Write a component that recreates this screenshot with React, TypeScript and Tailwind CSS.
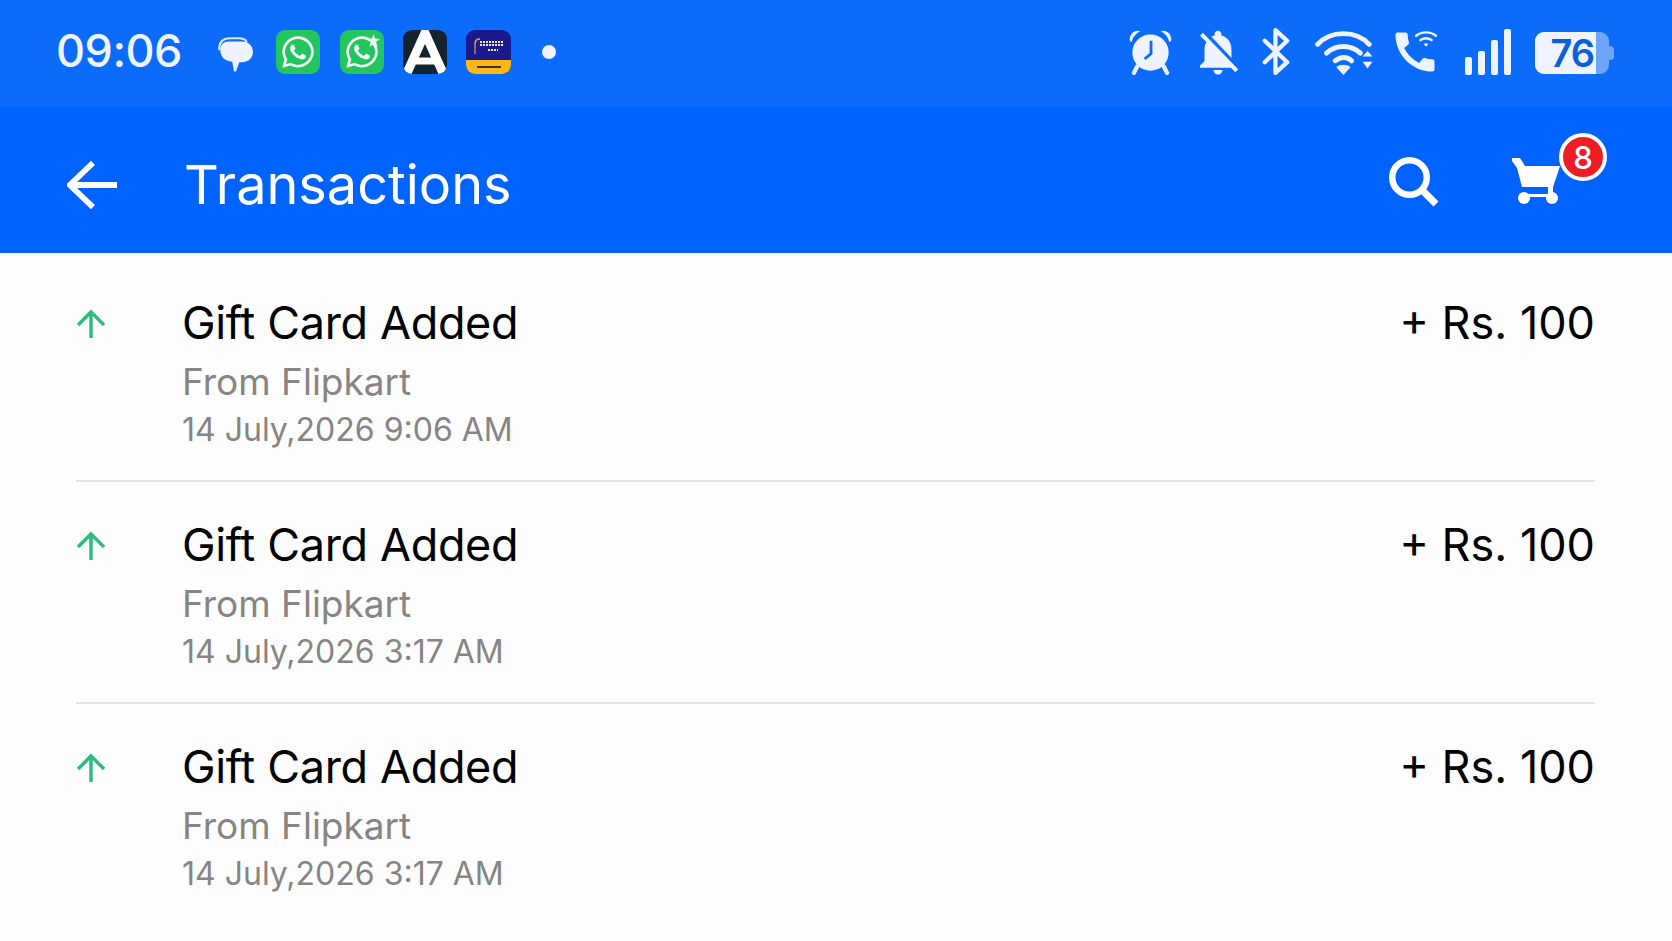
import { FaWhatsapp } from 'react-icons/fa';
import { MdNotificationsOff, MdCall } from 'react-icons/md';

const font = 'font-["Inter","Liberation_Sans",sans-serif]';

function ChatIcon() {
  return (
    <svg width="38" height="37" viewBox="0 0 33 34" fill="none" className="shrink-0 mt-[3px]">
      <path d="M2 13C2 6 6 3 12 3h8c4 0 6 1 7 3" stroke="#dfe9fb" strokeWidth="2" strokeLinecap="round" />
      <path d="M11 6h12c6 0 10 4 10 9.500S29 25 23 25h-2.500l-3 8c-.5 1-1.500 1-2 0l-1.500-8.500C7 24 3 20 3 14c0-5 3-8 8-8z" fill="#eef3fd" />
    </svg>
  );
}

function AppLogo() {
  return (
    <div className="w-[44px] h-[44px] rounded-[9px] bg-[#14242f] overflow-hidden shrink-0 ml-[19px]">
      <svg width="44" height="44" viewBox="0 0 44 44" fill="none">
        <path d="M4 43 22 3 40 43" stroke="#fff" strokeWidth="9" />
        <path d="M12 31h20" stroke="#fff" strokeWidth="7" />
      </svg>
    </div>
  );
}

function BannerApp() {
  return (
    <div className="w-[45px] h-[44px] rounded-[9px] bg-[#1a1a8c] overflow-hidden shrink-0 ml-[19px] flex flex-col">
      <svg width="45" height="30" viewBox="0 0 45 30" fill="none" className="shrink-0">
        <path d="M9 14c0-3 2-5 5-5" stroke="#e8a23c" strokeWidth="1.500" />
        <path d="M9 14v10" stroke="#e8a23c" strokeWidth="1.200" />
        <path d="M14 12h23M14 15h23M22 20h10" stroke="#e6e6f5" strokeWidth="1.800" strokeDasharray="2 1" />
      </svg>
      <div className="flex-1 bg-[#fcb814] flex items-center justify-center">
        <div className="w-[24px] h-[2px] bg-[#3a2c10]" />
      </div>
    </div>
  );
}

function AlarmIcon() {
  return (
    <svg width="45" height="47" viewBox="0 0 41 44" fill="none" className="shrink-0">
      <path d="M1 11C1 5 6 1 11 3 7 5 4 8 3 13c-1 0-2-1-2-2zM40 11c0-6-5-10-10-8 4 2 7 5 8 10 1 0 2-1 2-2z" fill="#eef3fd" />
      <path d="M8 36 5 42M33 36l3 6" stroke="#eef3fd" strokeWidth="4" strokeLinecap="round" />
      <circle cx="20.500" cy="23" r="17" fill="#eef3fd" />
      <path d="M21 12v12l-6 5" stroke="#0b6cfb" strokeWidth="2.600" />
    </svg>
  );
}

function BluetoothIcon() {
  return (
    <svg width="29" height="47" viewBox="0 0 26 44" fill="none" className="shrink-0 ml-[22px]">
      <path d="M2 12 23 32 12 42V2l11 10L2 32" stroke="#eef3fd" strokeWidth="4" strokeLinejoin="round" strokeLinecap="round" />
    </svg>
  );
}

function WifiIcon() {
  return (
    <svg width="59" height="46" viewBox="0 0 53 42" fill="none" className="shrink-0 ml-[24px]">
      <path d="M2 14C14 1 37 1 49 14" stroke="#eef3fd" strokeWidth="4.500" strokeLinecap="round" />
      <path d="M10 22c9-8 22-8 31 0" stroke="#eef3fd" strokeWidth="4.500" strokeLinecap="round" />
      <path d="M18 29c5-4 11-4 15 0" stroke="#eef3fd" strokeWidth="4.500" strokeLinecap="round" />
      <path d="M19 35c3-3 10-3 13 0l-6.500 7z" fill="#eef3fd" />
      <path d="M43 25h9l-4.500-5zM43 30h9l-4.500 6z" fill="#eef3fd" />
    </svg>
  );
}

function CallWifiIcon() {
  return (
    <div className="relative w-[42px] h-[44px] shrink-0 ml-[21px]">
      <MdCall size={52} className="text-[#eef3fd] -ml-[6px] -mt-[4px]" />
      <svg width="22" height="18" viewBox="0 0 20 16" fill="none" className="absolute right-0 top-0">
        <path d="M1 5c5-4 13-4 18 0M5 9c3-2 7-2 10 0" stroke="#eef3fd" strokeWidth="2.200" strokeLinecap="round" />
        <path d="M8 12.500c1-1 3-1 4 0l-2 2.500z" fill="#eef3fd" />
      </svg>
    </div>
  );
}

function SignalIcon() {
  return (
    <div className="flex items-end gap-[6px] h-[46px] shrink-0 ml-[28px]">
      <div className="w-[7px] h-[18px] rounded-[2px] bg-[#eef3fd]" />
      <div className="w-[7px] h-[24px] rounded-[2px] bg-[#eef3fd]" />
      <div className="w-[7px] h-[35px] rounded-[2px] bg-[#eef3fd]" />
      <div className="w-[7px] h-[46px] rounded-[2px] bg-[#eef3fd]" />
    </div>
  );
}

function Battery() {
  return (
    <div className="flex items-center shrink-0 ml-[24px] mt-[3px]">
      <div className="w-[74px] h-[42px] rounded-[9px] bg-[#6fa5f8] flex">
        <div className="w-[61px] h-full rounded-l-[9px] bg-[#eef3fd] flex items-center justify-end pr-[2px]">
          <span className="text-[38px] leading-[42px] font-semibold text-[#0b5fd8] tracking-[-1px]">76</span>
        </div>
      </div>
      <div className="w-[5px] h-[14px] rounded-r-[4px] bg-[#6fa5f8]" />
    </div>
  );
}

function StatusBar() {
  return (
    <div className="h-[106px] bg-[#0b6cfb] flex items-center pl-[56px] pr-[58px] pb-[3px]">
      <span className="text-[45px] leading-none font-medium tracking-[-0.5px] text-[#eef3fd] w-[160px] shrink-0 -mt-[2px]">09:06</span>
      <ChatIcon />
      <div className="w-[44px] h-[44px] rounded-[9px] bg-[#22c55e] flex items-center justify-center shrink-0 ml-[22px]">
        <FaWhatsapp size={36} className="text-[#f2fbf5]" />
      </div>
      <div className="relative w-[44px] h-[44px] rounded-[9px] bg-[#22c55e] flex items-center justify-center shrink-0 ml-[20px]">
        <FaWhatsapp size={36} className="text-[#f2fbf5]" />
        <svg width="13" height="13" viewBox="0 0 12 12" className="absolute right-[4px] top-[4px]">
          <path d="M6 0 7.400 4.200 12 4.500 8.400 7.200 9.700 12 6 9.300 2.300 12 3.600 7.200 0 4.500 4.600 4.200z" fill="#f2fbf5" />
        </svg>
      </div>
      <AppLogo />
      <BannerApp />
      <div className="w-[14px] h-[14px] rounded-full bg-[#eef3fd] shrink-0 ml-[31px]" />

      <div className="ml-auto flex items-center">
        <AlarmIcon />
        <MdNotificationsOff size={54} className="text-[#eef3fd] shrink-0 ml-[18px] -mr-[5px]" />
        <BluetoothIcon />
        <WifiIcon />
        <CallWifiIcon />
        <SignalIcon />
        <Battery />
      </div>
    </div>
  );
}

function AppBar() {
  return (
    <div className="h-[147px] bg-[#0063fe] flex items-center pl-[67px] pr-[110px] pt-[11px]">
      <svg width="50" height="50" viewBox="0 0 52 50" fill="none" className="shrink-0">
        <path d="M27 2 3 25l24 23M3 25h49" stroke="#fff" strokeWidth="6" />
      </svg>
      <span className="ml-[67px] text-[54px] leading-none text-white">Transactions</span>
      <div className="ml-auto flex items-center">
        <svg width="50" height="50" viewBox="0 0 50 50" fill="none" className="shrink-0 -mt-[6px]">
          <circle cx="20.500" cy="20.500" r="17.250" stroke="#fff" strokeWidth="6.500" />
          <path d="M32 32 47 47" stroke="#fff" strokeWidth="7" />
        </svg>
        <div className="relative w-[50px] h-[50px] ml-[73px] shrink-0 -mt-[6px]">
          <svg width="50" height="50" viewBox="0 0 50 50" fill="none">
            <path d="M0 1h8l5 8h35l-7 21H10L5 11 0 4z" fill="#fff" />
            <path d="M36 30h5v10H10v-3h26z" fill="#fff" />
            <circle cx="12" cy="41" r="6" fill="#fff" />
            <circle cx="40" cy="41" r="6" fill="#fff" />
          </svg>
          <div className="absolute left-[47px] -top-[24px] w-[48px] h-[48px] rounded-full bg-[#ee1c25] border-[4px] border-white flex items-center justify-center text-[31px] font-medium leading-none text-white">
            8
          </div>
        </div>
      </div>
    </div>
  );
}

function TxRow({ date }: { date: string }) {
  return (
    <div className="h-[222px] flex pt-[38px] border-b-2 border-[#e4e4e4] last:border-b-0">
      <svg width="30" height="30" viewBox="0 0 30 30" fill="none" className="shrink-0 mt-[11px]">
        <path d="M15 29V3M2 16 15 3l13 13" stroke="#2ebd7e" strokeWidth="3.500" />
      </svg>
      <div className="ml-[76px] flex-1 min-w-0">
        <div className="text-[45px] leading-[50px] tracking-[-0.35px] text-black">Gift Card Added</div>
        <div className="mt-[11px] text-[37px] leading-[46px] text-[#858585]">From Flipkart</div>
        <div className="mt-[3px] text-[32px] leading-[44px] text-[#858585]">{date}</div>
      </div>
      <div className="text-[45px] leading-[50px] text-black shrink-0">+ Rs. 100</div>
    </div>
  );
}

export default function App() {
  return (
    <div className={`${font} w-[1672px] h-[941px] overflow-hidden bg-[#fdfdfd]`}>
      <StatusBar />
      <AppBar />
      <div className="pl-[76px] pr-[77px] pt-[7px]">
        <TxRow date="14 July,2026 9:06 AM" />
        <TxRow date="14 July,2026 3:17 AM" />
        <TxRow date="14 July,2026 3:17 AM" />
      </div>
    </div>
  );
}
